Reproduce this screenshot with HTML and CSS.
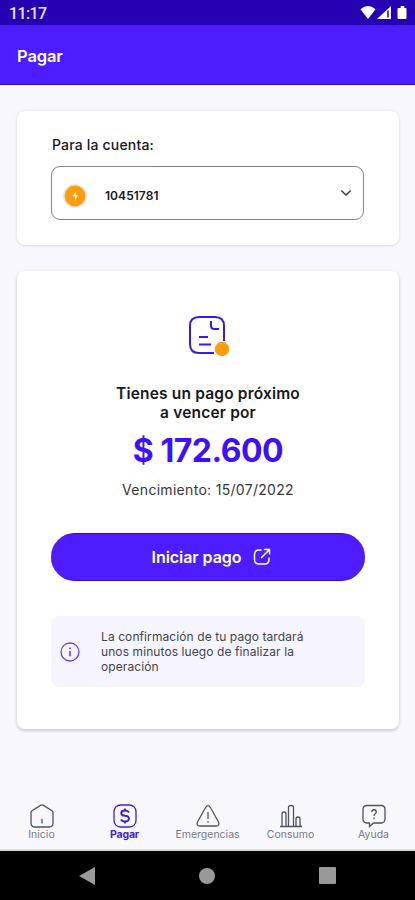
FILE: index.html
```html
<!DOCTYPE html>
<html lang="es">
<head>
<meta charset="utf-8">
<title>Pagar</title>
<link rel="stylesheet" href="styles.css">
</head>
<body>
<div class="screen">
  <div class="status">
    <span class="clock">11:17</span>
    <svg class="signals" width="48" height="16" viewBox="0 0 48 16" fill="#fff">
      <path d="M0.500 4.200Q8 -2.200 15.500 4.200L8 14Z"/>
      <path d="M31 1V14H17Z"/>
      <path d="M28 5.500V12.500" stroke="#2600b3" stroke-width="1.500"/>
      <path d="M38.500 3h2.200V1h3.600V3h1.200q1 0 1 1v9q0 1-1 1h-7q-1 0-1-1V4q0-1 1-1z"/>
    </svg>
  </div>
  <header class="appbar"><h1>Pagar</h1></header>
  <main class="content">
    <section class="card account">
      <label class="account-label">Para la cuenta:</label>
      <div class="select">
        <svg class="bolt" width="26" height="26" viewBox="0 0 26 26">
          <circle cx="13" cy="13" r="12" fill="#e4e7f0"/>
          <circle cx="13" cy="13" r="10.400" fill="#ff9c0c"/>
          <path d="M14 8.500L10.300 13.300H13V17.500L16 12.300H13.500Z" fill="#fff"/>
        </svg>
        <span class="number">10451781</span>
        <svg class="chevron" width="12" height="8" viewBox="0 0 12 8" fill="none" stroke="#333" stroke-width="1.300"><path d="M1.200 1.500L6 6L10.800 1.500"/></svg>
      </div>
    </section>
    <section class="card payment">
      <svg class="doc" width="44" height="44" viewBox="0 0 44 44" fill="none" stroke="#3d16ec" stroke-width="2">
        <path d="M37 27V12Q37 3 28 3H12Q3 3 3 12V30Q3 39 12 39H27"/>
        <path d="M24 7V11.500Q24 15 27.500 15H32M12 23H21M12 30.500H24"/>
        <circle cx="35" cy="35" r="7.200" fill="#ff9c0c" stroke="none"/>
      </svg>
      <h2>Tienes un pago próximo<br>a vencer por</h2>
      <div class="amount">$ 172.600</div>
      <div class="due">Vencimiento: 15/07/2022</div>
      <button class="cta"><span>Iniciar pago</span>
        <svg width="18" height="18" viewBox="0 0 18 18" fill="none" stroke="#fff" stroke-width="1.500" stroke-linecap="round">
          <path d="M8 2H6Q1.500 2 1.500 6.500V11.500Q1.500 16 6 16H11.500Q16 16 16 11.500V10M8.500 9.500L16 2M11.500 1.500H16.500V6"/>
        </svg>
      </button>
      <div class="notice">
        <svg width="20" height="20" viewBox="0 0 20 20" fill="none" stroke="#6740f0" stroke-width="1.300">
          <circle cx="10" cy="10" r="9"/><path d="M10 9V14.300M10 5.500V7.200" stroke-width="1.600"/>
        </svg>
        <p>La confirmación de tu pago tardará<br>unos minutos luego de finalizar la<br>operación</p>
      </div>
    </section>
  </main>
  <nav class="tabs">
    <div class="tab">
      <svg width="26" height="26" viewBox="0 0 26 26"><path d="M2 9.500Q2 8.500 3 7.800L11.500 2.400Q13 1.500 14.500 2.400L23 7.800Q24 8.500 24 9.500V20Q24 24 20 24H6Q2 24 2 20ZM13 16V20.500"/></svg>
      <span>Inicio</span>
    </div>
    <div class="tab active">
      <svg width="26" height="26" viewBox="0 0 26 26"><rect x="2" y="2" width="22" height="22" rx="6.500"/><path d="M17 9.500Q16 7.500 13 7.500C8 7.500 8 12.500 13 12.800C18.500 13 18 18.500 13 18.500Q10 18.500 9 16.300M13 5.500V7.500M13 18.500V20.500" stroke-width="1.900"/></svg>
      <span>Pagar</span>
    </div>
    <div class="tab emergencies">
      <svg width="26" height="26" viewBox="0 0 26 26"><path d="M10.700 4.300Q13 1 15.300 4.300L23.500 19Q25 23 21 23H5Q1 23 2.500 19ZM13 9V16M13 18V19.800"/></svg>
      <span>Emergencias</span>
    </div>
    <div class="tab consumption">
      <svg width="26" height="26" viewBox="0 0 26 26"><path d="M2 23.500H24M4 23V11Q4 9 6 9T8 11V23M10.500 23V4.500Q10.500 2.500 13 2.500T15.500 4.500V23M18 23V16Q18 14 20 14T22 16V23"/></svg>
      <span>Consumo</span>
    </div>
    <div class="tab">
      <svg width="26" height="26" viewBox="0 0 26 26"><path d="M6 2.500H20Q24 2.500 24 6.500V15.500Q24 20 20 20H12.500L8.500 23.500V20H6Q2 20 2 15.500V6.500Q2 2.500 6 2.500ZM10.800 9C10.800 6 15.300 6 15.300 9C15.300 11 13 10.500 13 13M13 14.500V16.300"/></svg>
      <span>Ayuda</span>
    </div>
  </nav>
  <div class="system">
    <svg width="16" height="18" viewBox="0 0 16 18"><path d="M0 9L16 0V18Z"/></svg>
    <svg width="16" height="16" viewBox="0 0 16 16"><circle cx="8" cy="8" r="8"/></svg>
    <svg width="17" height="17" viewBox="0 0 17 17"><rect width="17" height="17" rx="1"/></svg>
  </div>
</div>
</body>
</html>
```
FILE: styles.css
```css
* { box-sizing: border-box; }
body { margin: 0; font-family: Inter, "Liberation Sans", sans-serif; color: #17171c; }
h1, h2, p { margin: 0; }
svg { display: block; flex: none; }
.screen { width: 415px; height: 900px; display: flex; flex-direction: column; background: #f8f8fc; overflow: hidden; }
.status { height: 25px; flex: none; display: flex; justify-content: space-between; padding: 5px 7px 0 9px; background: #2600b3; color: #e9e4ff; }
.clock { font: 500 16px/18px Roboto, sans-serif; letter-spacing: -.6px; }
.appbar { height: 60px; flex: none; padding: 20px 17px 0; background: #4d1dff; border-bottom: 1px solid #3507dc; color: #fff; }
.appbar h1 { font-size: 16.500px; line-height: 22px; font-weight: 600; letter-spacing: -.1px; }
.content { flex: 1; padding: 26px 16px 0 17px; }
.card { background: #fff; border-radius: 8px; }
.account { height: 134px; padding: 24px 34px 0; box-shadow: 0 0 3px #dfdfe5, 0 1px 2px #dfdfe5; }
.account-label { display: block; height: 31px; padding-left: 1px; font-size: 14px; line-height: 20px; font-weight: 500; letter-spacing: .18px; }
.select { height: 54px; width: 313px; display: flex; align-items: center; padding: 5px 11px 0 10px; border: 1px solid #85858e; border-radius: 9px; }
.number { margin-left: 17px; flex: 1; font-size: 12px; font-weight: 600; letter-spacing: .05px; }
.chevron { margin-top: -5px; }
.payment { height: 458px; margin-top: 26px; padding: 43px 34px 0; display: flex; flex-direction: column; align-items: center; box-shadow: 0 1px 3px #d2d4da, 0 2px 3px #d2d4da; }
.doc { margin-left: 2px; }
h2 { margin-top: 26px; font-size: 15.500px; line-height: 19px; font-weight: 600; letter-spacing: .18px; text-align: center; }
.amount { margin-top: 10px; font-size: 32px; line-height: 38px; font-weight: 700; letter-spacing: -.5px; color: #3d10ff; }
.due { margin-top: 10px; font-size: 14px; line-height: 20px; letter-spacing: .3px; color: #36363b; }
.cta { width: 314px; height: 48px; margin-top: 33px; padding: 0; display: flex; flex: none; align-items: center; justify-content: center; gap: 12px; border: 0; border-top: 1px solid #3507dc; border-bottom: 1px solid #3507dc; border-radius: 24px; background: #4d1dff; color: #fff; font: 600 16px Inter, sans-serif; letter-spacing: -.05px; }
.cta span { padding-left: 7px; }
.notice { width: 314px; height: 71px; margin-top: 35px; padding-left: 9px; display: flex; align-items: center; gap: 21px; border-radius: 8px; background: #f6f4ff; }
.notice p { font-size: 12px; line-height: 15px; letter-spacing: .09px; color: #45454c; }
.tabs { height: 55px; flex: none; display: grid; grid-template-columns: repeat(5, 83px); border-bottom: 2px solid #ddd; }
.tab { display: flex; flex-direction: column; align-items: center; color: #777982; font-size: 10.500px; line-height: 12px; }
.tab svg { margin-top: 7px; fill: none; stroke: #505163; stroke-width: 1.300; }
.tab.active { color: #4219ef; font-weight: 700; letter-spacing: -.2px; }
.tab.active svg { stroke: #4219ef; }
.system { height: 49px; flex: none; display: flex; align-items: center; justify-content: space-between; padding: 0 79px; background: #000; }
.system svg { fill: #999; }
```
